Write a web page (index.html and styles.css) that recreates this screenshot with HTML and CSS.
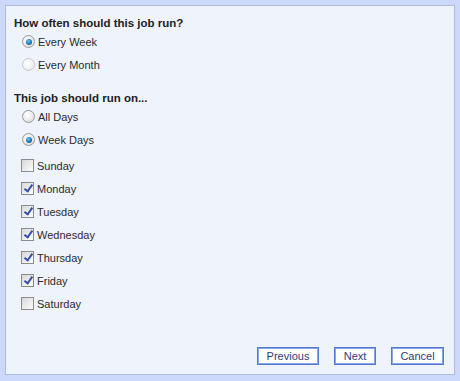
FILE: index.html
```html
<!DOCTYPE html>
<html>
<head>
<meta charset="utf-8">
<link rel="stylesheet" href="styles.css">
</head>
<body>
<div class="panel">
  <div class="content">
    <h2 class="heading">How often should this job run?</h2>
    <div class="opt"><span class="radio checked"></span><span class="lbl">Every Week</span></div>
    <div class="opt disabled"><span class="radio"></span><span class="lbl">Every Month</span></div>

    <h2 class="heading second">This job should run on...</h2>
    <div class="opt"><span class="radio"></span><span class="lbl">All Days</span></div>
    <div class="opt"><span class="radio checked"></span><span class="lbl">Week Days</span></div>
    <div class="days">
      <div class="opt cb"><span class="check"></span><span class="lbl">Sunday</span></div>
      <div class="opt cb"><span class="check on"></span><span class="lbl">Monday</span></div>
      <div class="opt cb"><span class="check on"></span><span class="lbl">Tuesday</span></div>
      <div class="opt cb"><span class="check on"></span><span class="lbl">Wednesday</span></div>
      <div class="opt cb"><span class="check on"></span><span class="lbl">Thursday</span></div>
      <div class="opt cb"><span class="check on"></span><span class="lbl">Friday</span></div>
      <div class="opt cb"><span class="check"></span><span class="lbl">Saturday</span></div>
    </div>
  </div>
  <div class="buttons">
    <button class="btn btn-prev">Previous</button>
    <button class="btn btn-next">Next</button>
    <button class="btn btn-cancel">Cancel</button>
  </div>
</div>
</body>
</html>
```

FILE: styles.css
```css
html, body {
  margin: 0;
  padding: 0;
  background: #cdd9fc;
}
body {
  padding: 5px;
  font-family: "Liberation Sans", Arial, sans-serif;
  color: #2b2b2b;
  width: 460px;
  height: 381px;
  box-sizing: border-box;
}
.panel {
  width: 450px;
  height: 370px;
  box-sizing: border-box;
  background: #eef3fc;
  border: 1px solid #aebcdc;
  display: flex;
  flex-direction: column;
}
.content {
  flex: 1;
  padding: 8px 0 0 8px;
}
.heading {
  margin: 0;
  font-size: 11.5px;
  font-weight: bold;
  color: #222;
  line-height: 16px;
  height: 16px;
  padding-top: 1px;
  box-sizing: border-box;
}
.heading.second {
  margin-top: 13px;
}
.days {
  margin-top: 3px;
}
.opt {
  display: flex;
  align-items: center;
  height: 23px;
  padding-left: 8px;
  font-size: 11px;
}
.opt.cb {
  padding-left: 7px;
}
.lbl {
  margin-left: 3px;
  line-height: 14px;
}
.radio {
  width: 11px;
  height: 11px;
  border-radius: 50%;
  border: 1px solid #9a9a9a;
  background: radial-gradient(circle at 40% 35%, #ffffff 0%, #e8e8e8 60%, #d0d0d0 100%);
  position: relative;
  flex: none;
}
.opt.disabled .radio {
  border-color: #cacaca;
  background: radial-gradient(circle at 40% 35%, #ffffff 0%, #eeeeee 70%, #e4e4e4 100%);
}
.radio.checked::after {
  content: "";
  position: absolute;
  left: 2.5px;
  top: 2.5px;
  width: 6px;
  height: 6px;
  border-radius: 50%;
  background: radial-gradient(circle at 40% 35%, #6ac8f4 0%, #1a75b8 55%, #0d3d6e 100%);
}
.check {
  width: 11px;
  height: 11px;
  border: 1px solid #8c8c8c;
  background: linear-gradient(135deg, #d8d8d8 0%, #f0f0f0 65%, #ffffff 100%);
  position: relative;
  flex: none;
}
.check.on::after {
  content: "";
  position: absolute;
  left: 3.5px;
  top: 0px;
  width: 3px;
  height: 7px;
  border-right: 2px solid #3550a8;
  border-bottom: 2px solid #3550a8;
  transform: rotate(35deg);
}
.buttons {
  display: flex;
  justify-content: flex-end;
  gap: 15px;
  padding: 0 10px 9px 0;
}
.btn {
  font-family: "Liberation Sans", Arial, sans-serif;
  font-size: 11px;
  color: #2a3d7e;
  background: #ffffff;
  border: 1px solid #4f7ad2;
  box-shadow: inset 0 0 0 1px #8aa7e4;
  height: 18px;
  padding: 0;
  line-height: 16px;
  margin: 0;
  cursor: pointer;
}
.btn-prev { width: 62px; }
.btn-next { width: 42px; }
.btn-cancel { width: 53px; }
```
